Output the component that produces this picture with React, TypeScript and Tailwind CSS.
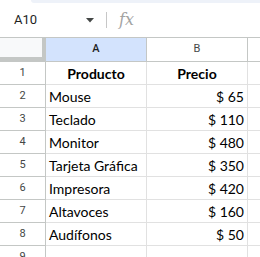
import React from "react";

const rows: [string, string, string][] = [
  ["1", "Producto", "Precio"],
  ["2", "Mouse", "$ 65"],
  ["3", "Teclado", "$ 110"],
  ["4", "Monitor", "$ 480"],
  ["5", "Tarjeta Gráfica", "$ 350"],
  ["6", "Impresora", "$ 420"],
  ["7", "Altavoces", "$ 160"],
  ["8", "Audífonos", "$ 50"],
  ["9", "", ""],
];

export default function App() {
  return (
    <div className="w-[260px] h-[257px] overflow-hidden bg-white" style={{ fontFamily: "Roboto, 'Liberation Sans', sans-serif" }}>
      {/* toolbar edge */}
      <div className="ml-[31px] h-[3px] rounded-bl-[6px] bg-[#eef2f9]" />
      {/* formula bar */}
      <div className="h-[34px] flex items-center">
        <div className="w-[80px] pl-[14px] text-[13px] text-[#1f1f1f]">A10</div>
        <svg width="8" height="5" viewBox="0 0 8 5" className="ml-[6px]">
          <path d="M0 0 L8 0 L4 4.5 Z" fill="#444746" />
        </svg>
        <div className="ml-[12px] w-px h-[16px] bg-[#c7c7c7]" />
        <div
          className="ml-[12px] text-[16px] italic text-[#a3a3a3] leading-none"
          style={{ fontFamily: "'DejaVu Serif', 'Liberation Serif', serif" }}
        >
          fx
        </div>
      </div>
      {/* grid */}
      <div className="border-t border-[#c4c7c5]">
        {/* header row */}
        <div className="flex h-[24px]">
          <div className="w-[46px] h-[24px] bg-[#f8f9fa] border-r-4 border-b-[5px] border-[#c4c7c5]" />
          <div className="w-[101px] bg-[#d3e3fd] border-r border-b border-[#c4c7c5] flex items-center justify-center text-[11px] font-medium text-[#1f1f1f]">
            A
          </div>
          <div className="w-[101px] bg-white border-r border-b border-[#c4c7c5] flex items-center justify-center text-[11px] text-[#444746]">
            B
          </div>
          <div className="flex-1 border-b border-[#c4c7c5]" />
        </div>
        {rows.map(([n, a, b]) => {
          const bold = n === "1";
          return (
            <div key={n} className="flex h-[23px]">
              <div className="w-[46px] border-r border-b border-r-[#c4c7c5] border-b-[#c4c7c5] flex items-center justify-center text-[11px] text-[#444746]">
                {n}
              </div>
              <div
                className={`w-[101px] border-r border-b border-[#e1e1e1] flex items-center pt-[1px] text-[14px] text-[#000000] ${bold ? "justify-center font-bold" : "pl-[3px]"}`}
                style={{ fontFamily: "Lato, 'Open Sans', sans-serif" }}
              >
                {a}
              </div>
              <div
                className={`w-[101px] border-r border-b border-[#e1e1e1] flex items-center pt-[1px] text-[14px] text-[#000000] ${bold ? "justify-center font-bold" : "justify-end pr-[3px]"}`}
                style={{ fontFamily: "Lato, 'Open Sans', sans-serif" }}
              >
                {b}
              </div>
              <div className="flex-1 border-b border-[#e1e1e1]" />
            </div>
          );
        })}
      </div>
    </div>
  );
}
